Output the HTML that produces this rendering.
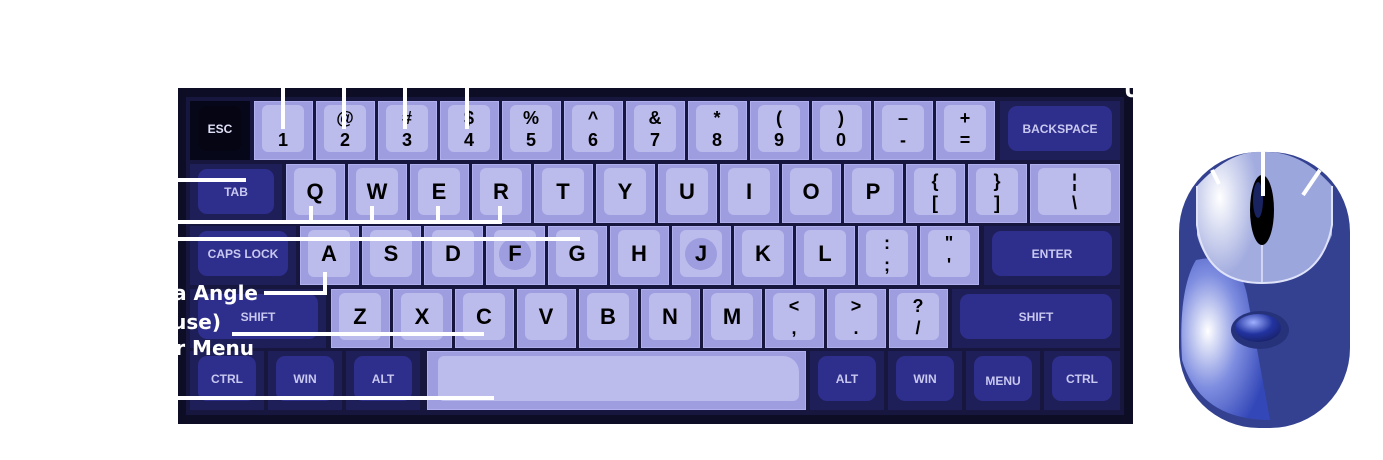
<!DOCTYPE html>
<html><head><meta charset="utf-8"><style>
*{margin:0;padding:0;box-sizing:border-box}
body{width:1383px;height:460px;background:#fff;position:relative;overflow:hidden;font-family:"Liberation Sans",Arial,sans-serif}
.kb{position:absolute;left:178px;top:88px;width:955px;height:336px;background:#0d0d26}
.plate{position:absolute;left:186px;top:97px;width:938px;height:318px;background:#16163e}
.k{position:absolute;height:59px;background:#9d9de0;border:1px solid #b0b0ee}
.k b{position:absolute;left:7px;right:8px;top:3px;bottom:7px;background:#bbbbec;border-radius:6px;display:flex;flex-direction:column;align-items:center;justify-content:center;color:#000;font-weight:bold;font-size:22px;line-height:20px}
.k b.s{font-size:18px;line-height:22px}
.d{position:absolute;height:59px;background:#1e1e58}
.d b{position:absolute;left:8px;right:8px;top:5px;bottom:9px;background:#2e2e8c;border-radius:9px;display:flex;align-items:center;justify-content:center;color:#c8c8f0;font-weight:bold;font-size:12px}
.l{position:absolute;background:#fff}
.t{position:absolute;color:#fff;font-family:"DejaVu Sans",sans-serif;font-weight:bold;font-size:20px;white-space:nowrap;text-align:right}
.dot{position:absolute;left:50%;top:50%;width:32px;height:32px;margin:-16px 0 0 -16px;border-radius:50%;background:#9d9de0}
</style></head><body>
<div class="kb"></div><div class="plate"></div>
<div class="d" style="left:190px;top:101px;width:60px;background:#07071a"><b style="background:#050514;color:#e0e0f8">ESC</b></div>
<div class="k" style="left:254px;top:101px;width:59px"><b class="s"><span>!</span><span>1</span></b></div>
<div class="k" style="left:316px;top:101px;width:59px"><b class="s"><span>@</span><span>2</span></b></div>
<div class="k" style="left:378px;top:101px;width:59px"><b class="s"><span>#</span><span>3</span></b></div>
<div class="k" style="left:440px;top:101px;width:59px"><b class="s"><span>$</span><span>4</span></b></div>
<div class="k" style="left:502px;top:101px;width:59px"><b class="s"><span>%</span><span>5</span></b></div>
<div class="k" style="left:564px;top:101px;width:59px"><b class="s"><span>^</span><span>6</span></b></div>
<div class="k" style="left:626px;top:101px;width:59px"><b class="s"><span>&amp;</span><span>7</span></b></div>
<div class="k" style="left:688px;top:101px;width:59px"><b class="s"><span>*</span><span>8</span></b></div>
<div class="k" style="left:750px;top:101px;width:59px"><b class="s"><span>(</span><span>9</span></b></div>
<div class="k" style="left:812px;top:101px;width:59px"><b class="s"><span>)</span><span>0</span></b></div>
<div class="k" style="left:874px;top:101px;width:59px"><b class="s"><span>–</span><span>-</span></b></div>
<div class="k" style="left:936px;top:101px;width:59px"><b class="s"><span>+</span><span>=</span></b></div>
<div class="d" style="left:1000px;top:101px;width:120px"><b>BACKSPACE</b></div>

<div class="d" style="left:190px;top:164px;width:92px"><b>TAB</b></div>
<div class="k" style="left:286px;top:164px;width:59px"><b>Q</b></div>
<div class="k" style="left:348px;top:164px;width:59px"><b>W</b></div>
<div class="k" style="left:410px;top:164px;width:59px"><b>E</b></div>
<div class="k" style="left:472px;top:164px;width:59px"><b>R</b></div>
<div class="k" style="left:534px;top:164px;width:59px"><b>T</b></div>
<div class="k" style="left:596px;top:164px;width:59px"><b>Y</b></div>
<div class="k" style="left:658px;top:164px;width:59px"><b>U</b></div>
<div class="k" style="left:720px;top:164px;width:59px"><b>I</b></div>
<div class="k" style="left:782px;top:164px;width:59px"><b>O</b></div>
<div class="k" style="left:844px;top:164px;width:59px"><b>P</b></div>
<div class="k" style="left:906px;top:164px;width:59px"><b class="s"><span>{</span><span>[</span></b></div>
<div class="k" style="left:968px;top:164px;width:59px"><b class="s"><span>}</span><span>]</span></b></div>
<div class="k" style="left:1030px;top:164px;width:90px"><b class="s"><span>¦</span><span>\</span></b></div>

<div class="d" style="left:190px;top:226px;width:106px"><b>CAPS LOCK</b></div>
<div class="k" style="left:300px;top:226px;width:59px"><b>A</b></div>
<div class="k" style="left:362px;top:226px;width:59px"><b>S</b></div>
<div class="k" style="left:424px;top:226px;width:59px"><b>D</b></div>
<div class="k" style="left:486px;top:226px;width:59px"><b><i class="dot"></i><span style="position:relative">F</span></b></div>
<div class="k" style="left:548px;top:226px;width:59px"><b>G</b></div>
<div class="k" style="left:610px;top:226px;width:59px"><b>H</b></div>
<div class="k" style="left:672px;top:226px;width:59px"><b><i class="dot"></i><span style="position:relative">J</span></b></div>
<div class="k" style="left:734px;top:226px;width:59px"><b>K</b></div>
<div class="k" style="left:796px;top:226px;width:59px"><b>L</b></div>
<div class="k" style="left:858px;top:226px;width:59px"><b class="s"><span>:</span><span>;</span></b></div>
<div class="k" style="left:920px;top:226px;width:59px"><b class="s"><span>"</span><span>'</span></b></div>
<div class="d" style="left:984px;top:226px;width:136px"><b>ENTER</b></div>

<div class="d" style="left:190px;top:289px;width:136px"><b>SHIFT</b></div>
<div class="k" style="left:331px;top:289px;width:59px"><b>Z</b></div>
<div class="k" style="left:393px;top:289px;width:59px"><b>X</b></div>
<div class="k" style="left:455px;top:289px;width:59px"><b>C</b></div>
<div class="k" style="left:517px;top:289px;width:59px"><b>V</b></div>
<div class="k" style="left:579px;top:289px;width:59px"><b>B</b></div>
<div class="k" style="left:641px;top:289px;width:59px"><b>N</b></div>
<div class="k" style="left:703px;top:289px;width:59px"><b>M</b></div>
<div class="k" style="left:765px;top:289px;width:59px"><b class="s"><span>&lt;</span><span>,</span></b></div>
<div class="k" style="left:827px;top:289px;width:59px"><b class="s"><span>&gt;</span><span>.</span></b></div>
<div class="k" style="left:889px;top:289px;width:59px"><b class="s"><span>?</span><span>/</span></b></div>
<div class="d" style="left:952px;top:289px;width:168px"><b>SHIFT</b></div>

<div class="d" style="left:190px;top:351px;width:74px"><b>CTRL</b></div>
<div class="d" style="left:268px;top:351px;width:74px"><b>WIN</b></div>
<div class="d" style="left:346px;top:351px;width:74px"><b>ALT</b></div>
<div class="k" style="left:427px;top:351px;width:379px"><b style="left:10px;right:6px;top:4px;bottom:8px;border-radius:6px 16px 6px 6px"></b></div>
<div class="d" style="left:810px;top:351px;width:74px"><b>ALT</b></div>
<div class="d" style="left:888px;top:351px;width:74px"><b>WIN</b></div>
<div class="d" style="left:966px;top:351px;width:74px"><b style="padding-top:4px">MENU</b></div>
<div class="d" style="left:1044px;top:351px;width:76px"><b>CTRL</b></div>

<div class="l" style="left:281px;top:88px;width:4px;height:41px"></div>
<div class="l" style="left:342px;top:88px;width:4px;height:41px"></div>
<div class="l" style="left:403px;top:88px;width:4px;height:41px"></div>
<div class="l" style="left:465px;top:88px;width:4px;height:41px"></div>
<div class="l" style="left:178px;top:178px;width:68px;height:4px"></div>
<div class="l" style="left:178px;top:220px;width:324px;height:4px"></div>
<div class="l" style="left:309px;top:206px;width:4px;height:16px"></div>
<div class="l" style="left:370px;top:206px;width:4px;height:16px"></div>
<div class="l" style="left:436px;top:206px;width:4px;height:16px"></div>
<div class="l" style="left:498px;top:206px;width:4px;height:18px"></div>
<div class="l" style="left:178px;top:237px;width:402px;height:4px"></div>
<div class="l" style="left:323px;top:272px;width:4px;height:22px"></div>
<div class="l" style="left:264px;top:291px;width:63px;height:4px"></div>
<div class="l" style="left:232px;top:332px;width:252px;height:4px"></div>
<div class="l" style="left:178px;top:396px;width:316px;height:4px"></div>
<div class="t" style="right:1125px;top:281px">Camera Angle</div>
<div class="t" style="right:1162px;top:310px">(Mouse)</div>
<div class="t" style="right:1129px;top:336px">Char Menu</div>
<div class="t" style="left:1124px;top:78px">Use</div>

<svg style="position:absolute;left:0;top:0" width="1383" height="460">
<defs>
<radialGradient id="g1" cx="0.3" cy="0.45" r="0.7"><stop offset="0" stop-color="#fff"/><stop offset="0.5" stop-color="#7f8ee0"/><stop offset="1" stop-color="#3347b8"/></radialGradient>
<radialGradient id="g2" cx="0.35" cy="0.35" r="0.6"><stop offset="0" stop-color="#fff"/><stop offset="1" stop-color="#a2acdf"/></radialGradient>
<radialGradient id="g3" cx="0.4" cy="0.3" r="0.7"><stop offset="0" stop-color="#9fb0ff"/><stop offset="0.6" stop-color="#2233a0"/><stop offset="1" stop-color="#1a2470"/></radialGradient>
</defs>
<rect x="1179" y="152" width="171" height="276" rx="80" fill="#334190"/>
<path d="M1196 260 Q1240 250 1248 300 L1270 420 Q1200 420 1182 360 Q1178 290 1196 260Z" fill="url(#g1)"/>
<path d="M1197 186 Q1230 150 1262 152 L1262 283 Q1210 283 1197 235Z" fill="url(#g2)"/>
<path d="M1262 152 Q1300 150 1332 186 L1332 235 Q1312 283 1262 283Z" fill="#9ba6dd"/>
<path d="M1197 186 L1197 225 Q1205 283 1262 283 Q1322 283 1332 225 L1332 186" fill="none" stroke="#dfe3fa" stroke-width="2"/>
<line x1="1262" y1="152" x2="1262" y2="283" stroke="#dfe3fa" stroke-width="1.5"/>
<ellipse cx="1262" cy="210" rx="12" ry="35" fill="#000"/>
<ellipse cx="1258" cy="200" rx="5" ry="18" fill="#2a3aa0" opacity="0.6"/>
<ellipse cx="1260" cy="330" rx="29" ry="19" fill="#26337a"/>
<ellipse cx="1258" cy="328" rx="23" ry="14" fill="url(#g3)"/>
<line x1="1263" y1="152" x2="1263" y2="196" stroke="#fff" stroke-width="4"/>
<line x1="1212" y1="170" x2="1219" y2="184" stroke="#fff" stroke-width="4"/>
<line x1="1320" y1="170" x2="1303" y2="195" stroke="#fff" stroke-width="4"/>
</svg>
</body></html>
